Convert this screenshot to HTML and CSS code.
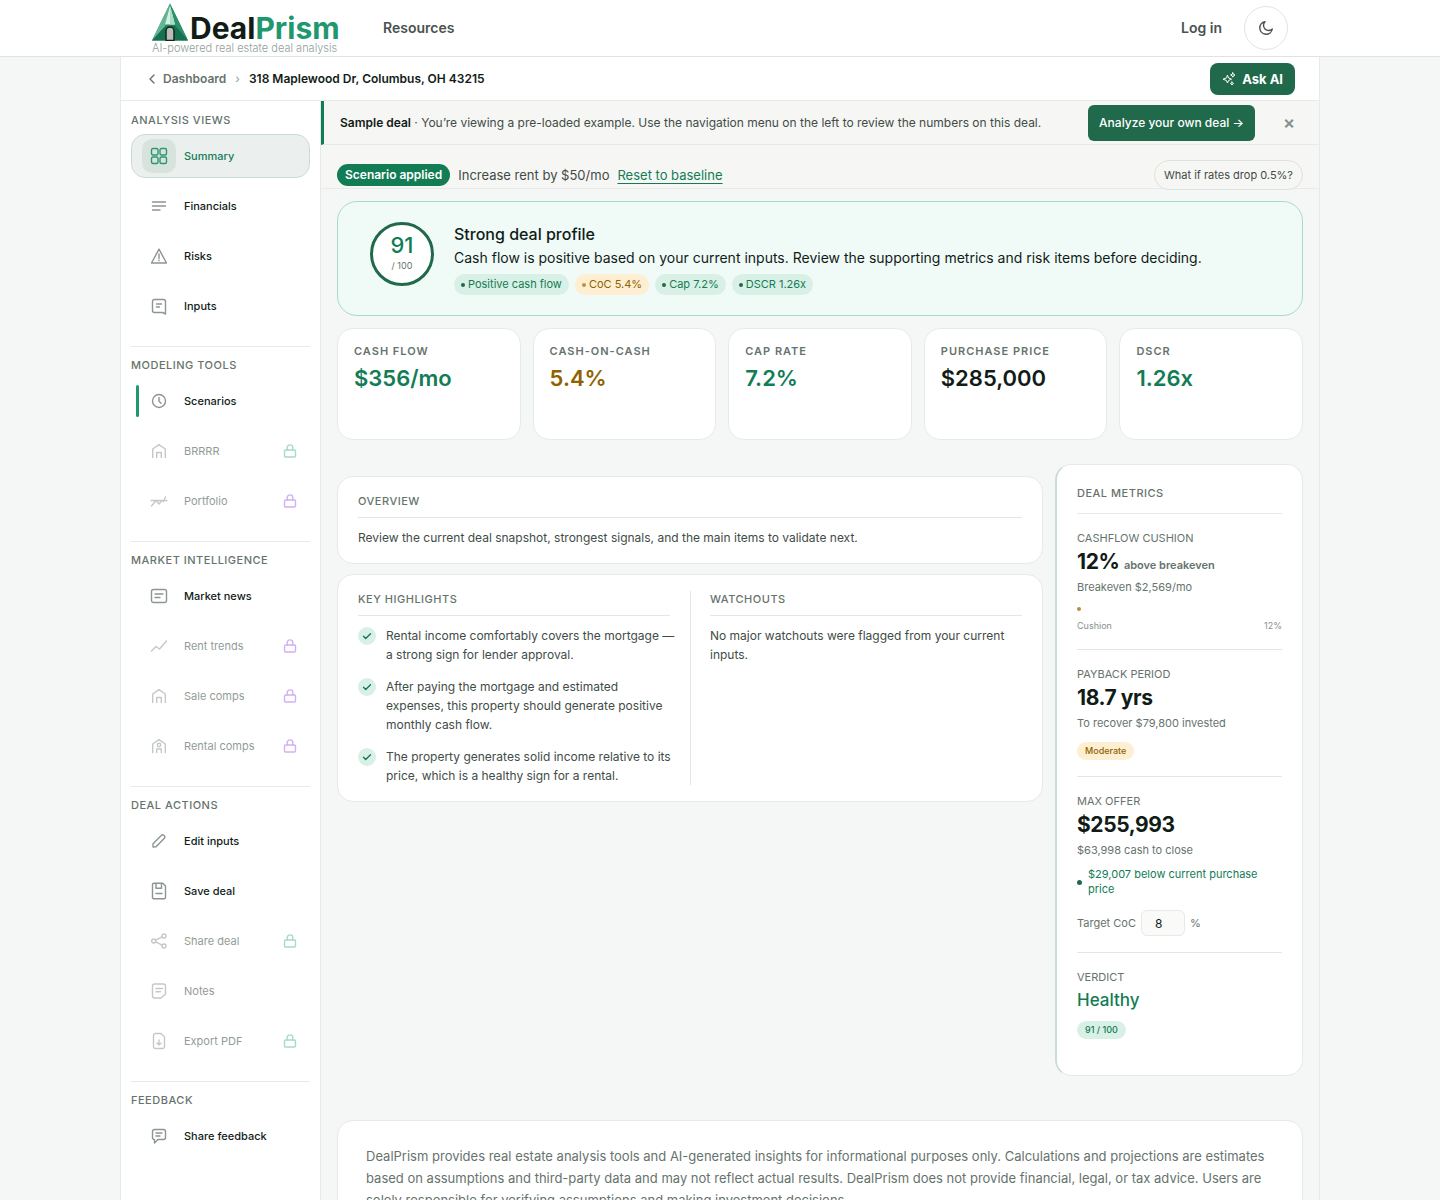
FILE: index.html
```html
<!DOCTYPE html>
<html lang="en">
<head>
  <meta charset="UTF-8">
  <meta name="viewport" content="width=device-width, initial-scale=1">
  <title>318 Maplewood Dr - DealPrism</title>
  <link rel="stylesheet" href="styles.css">
</head>
<body>

<!-- icon set -->
<svg class="sprite" aria-hidden="true">
  <symbol id="i-lock" viewBox="0 0 14 14"><rect x="1.5" y="6" width="11" height="7" rx="1.2"/><path d="M4.2 6V3.6C4.2 2 5.3.9 7 .9s2.800 1.100 2.800 2.700V6"/></symbol>
  <symbol id="i-grid" viewBox="0 0 18 18"><rect x="1.500" y="1.500" width="6.500" height="6.500" rx="1.500"/><rect x="10" y="1.500" width="6.500" height="6.500" rx="1.500"/><rect x="1.500" y="10" width="6.500" height="6.500" rx="1.500"/><rect x="10" y="10" width="6.500" height="6.500" rx="1.500"/></symbol>
  <symbol id="i-lines" viewBox="0 0 18 18"><path d="M2.500 5h13M2.500 9h13M2.500 13h7.500"/></symbol>
  <symbol id="i-risk" viewBox="0 0 18 18"><path d="M9 2.200 16.500 16h-15zM9 7v4.500M9 13.300v.4"/></symbol>
  <symbol id="i-inputs" viewBox="0 0 18 18"><path d="M12.500 15.500H4.500a2 2 0 0 1-2-2v-9a2 2 0 0 1 2-2h9a2 2 0 0 1 2 2V17zM6.500 7h5M6.500 10h3"/></symbol>
  <symbol id="i-clock" viewBox="0 0 18 18"><circle cx="9" cy="9" r="6.500"/><path d="M9 5.500V9.200l2 2"/></symbol>
  <symbol id="i-home" viewBox="0 0 18 18"><path d="M2.700 15.500V7L9 2.700 15.300 7v8.500M6.700 15.500v-5h4.600v5"/></symbol>
  <symbol id="i-rental" viewBox="0 0 18 18"><path d="M2.700 15.500V7L9 2.700 15.300 7v8.500M6.700 15.500v-3.500h4.600v3.500"/><circle cx="9" cy="8" r="1.700"/></symbol>
  <symbol id="i-portfolio" viewBox="0 0 18 18"><path d="M1 8.500h16M1.500 14 6 8.500l3 3.500 3-3.500 1.500 1L15.500 5"/></symbol>
  <symbol id="i-news" viewBox="0 0 18 18"><rect x="1.500" y="2.500" width="15" height="13" rx="2"/><path d="M5 7h8M5 10.500h5"/></symbol>
  <symbol id="i-trend" viewBox="0 0 18 18"><path d="M1.500 14 6 9.500l3.500 2.500 7-8"/></symbol>
  <symbol id="i-edit" viewBox="0 0 18 18"><path d="M3 15v-3.200L11.500 3.300a1.600 1.600 0 0 1 2.300 0l.6.600a1.600 1.600 0 0 1 0 2.300L6 14.800z"/></symbol>
  <symbol id="i-save" viewBox="0 0 18 18"><path d="M2.500 15.500V2.500a1.300 1.300 0 0 1 1.300-1.300h9L15.500 4v11.500a1.300 1.300 0 0 1-1.300 1.300H3.800a1.300 1.300 0 0 1-1.300-1.300zM6 1.500v4.700h5.500V1.500M6 11.500h6"/></symbol>
  <symbol id="i-share" viewBox="0 0 18 18"><circle cx="3.700" cy="9" r="2"/><circle cx="14" cy="4" r="2"/><circle cx="14" cy="14" r="2"/><path d="m5.600 8.100 6.500-3.200M5.600 9.900l6.500 3.200"/></symbol>
  <symbol id="i-notes" viewBox="0 0 18 18"><path d="M11 16H4.500a2 2 0 0 1-2-2V4a2 2 0 0 1 2-2h9a2 2 0 0 1 2 2v8zM6 6.500h6.500M6 9.800h4.500"/></symbol>
  <symbol id="i-pdf" viewBox="0 0 18 18"><path d="M11 1.500H5.200a1.700 1.700 0 0 0-1.700 1.700v11.600a1.700 1.700 0 0 0 1.700 1.700h7.600a1.700 1.700 0 0 0 1.700-1.700V5zM9 8v5M7 11l2 2 2-2"/></symbol>
  <symbol id="i-chat" viewBox="0 0 18 18"><path d="M4.500 2.500h9a2 2 0 0 1 2 2v6a2 2 0 0 1-2 2H8L4.500 16v-3.500a2 2 0 0 1-2-2v-6a2 2 0 0 1 2-2zM6 6h6M6 9h4"/></symbol>
  <symbol id="i-check" viewBox="0 0 10 10"><path d="M1.500 5.300 3.700 7.500 8.500 2.700"/></symbol>
</svg>

<header class="topbar">
  <div class="topbar-inner">
    <a href="#" class="logo">
      <span class="logo-row">
        <svg class="logo-mark" viewBox="0 0 36 37" aria-hidden="true">
          <path d="M18 0 0 37h36z" fill="#1f8a63"/>
          <path d="M18 0 7 22.500 0 37l13-14z" fill="#63b596"/>
          <path d="M18 0 36 37 23 22z" fill="#2b8f69"/>
          <path d="M0 37 13 23l10-1 13 15z" fill="#17704e"/>
          <path d="m18 2-5 19h10z" fill="#d3f0e3"/>
          <path d="M18 2v19h5z" fill="#a9dcc5"/>
          <path d="M14 37V27.500a4 4 0 0 1 8 0V37z" fill="#b9bdbb" stroke="#12241d" stroke-width="1.500"/>
        </svg>
        <span class="logo-name">Deal<b>Prism</b></span>
      </span>
      <span class="logo-tag">AI-powered real estate deal analysis</span>
    </a>
    <nav class="topnav"><a href="#">Resources</a></nav>
    <a href="#" class="login">Log in</a>
    <button class="theme-btn" type="button" aria-label="Toggle dark mode">
      <svg viewBox="0 0 16 16"><path d="M14.300 9A6.300 6.300 0 1 1 7 1.700 5 5 0 0 0 14.300 9z"/></svg>
    </button>
  </div>
</header>

<div class="shell">
  <div class="crumbs">
    <a href="#" class="back"><svg viewBox="0 0 8 10"><path d="M6 1 2 5l4 4"/></svg>Dashboard</a>
    <span class="sep">›</span>
    <span class="address">318 Maplewood Dr, Columbus, OH 43215</span>
    <button class="ask-btn" type="button">
      <svg viewBox="0 0 14 14"><path d="M5.500 3.500 6.700 6 9.500 7.200 6.700 8.400 5.500 11 4.300 8.400 1 7.200 4.300 6zM10.800.8l.7 1.500 1.500.7-1.500.7-.7 1.500-.7-1.500L8.600 3l1.500-.7zM10 10l.5 1 1 .5-1 .5-.5 1-.5-1-1-.5 1-.5z"/></svg>
      Ask AI
    </button>
  </div>

  <div class="layout">
    <aside class="sidebar">
      <section class="side-group">
        <h2>Analysis views</h2>
        <a href="#" class="side-item active"><span class="ico"><svg><use href="#i-grid"/></svg></span>Summary</a>
        <a href="#" class="side-item"><span class="ico"><svg><use href="#i-lines"/></svg></span>Financials</a>
        <a href="#" class="side-item"><span class="ico"><svg><use href="#i-risk"/></svg></span>Risks</a>
        <a href="#" class="side-item"><span class="ico"><svg><use href="#i-inputs"/></svg></span>Inputs</a>
      </section>
      <section class="side-group">
        <h2>Modeling tools</h2>
        <a href="#" class="side-item marked"><span class="ico"><svg><use href="#i-clock"/></svg></span>Scenarios</a>
        <a href="#" class="side-item off"><span class="ico"><svg><use href="#i-home"/></svg></span>BRRRR<svg class="lock"><use href="#i-lock"/></svg></a>
        <a href="#" class="side-item off"><span class="ico"><svg><use href="#i-portfolio"/></svg></span>Portfolio<svg class="lock pro"><use href="#i-lock"/></svg></a>
      </section>
      <section class="side-group">
        <h2>Market intelligence</h2>
        <a href="#" class="side-item"><span class="ico"><svg><use href="#i-news"/></svg></span>Market news</a>
        <a href="#" class="side-item off"><span class="ico"><svg><use href="#i-trend"/></svg></span>Rent trends<svg class="lock pro"><use href="#i-lock"/></svg></a>
        <a href="#" class="side-item off"><span class="ico"><svg><use href="#i-home"/></svg></span>Sale comps<svg class="lock pro"><use href="#i-lock"/></svg></a>
        <a href="#" class="side-item off"><span class="ico"><svg><use href="#i-rental"/></svg></span>Rental comps<svg class="lock pro"><use href="#i-lock"/></svg></a>
      </section>
      <section class="side-group">
        <h2>Deal actions</h2>
        <a href="#" class="side-item"><span class="ico"><svg><use href="#i-edit"/></svg></span>Edit inputs</a>
        <a href="#" class="side-item"><span class="ico"><svg><use href="#i-save"/></svg></span>Save deal</a>
        <a href="#" class="side-item off"><span class="ico"><svg><use href="#i-share"/></svg></span>Share deal<svg class="lock"><use href="#i-lock"/></svg></a>
        <a href="#" class="side-item off"><span class="ico"><svg><use href="#i-notes"/></svg></span>Notes</a>
        <a href="#" class="side-item off"><span class="ico"><svg><use href="#i-pdf"/></svg></span>Export PDF<svg class="lock"><use href="#i-lock"/></svg></a>
      </section>
      <section class="side-group">
        <h2>Feedback</h2>
        <a href="#" class="side-item"><span class="ico"><svg><use href="#i-chat"/></svg></span>Share feedback</a>
      </section>
    </aside>

    <main class="main">
      <div class="sample-bar">
        <p><strong>Sample deal</strong> · You’re viewing a pre-loaded example. Use the navigation menu on the left to review the numbers on this deal.</p>
        <a href="#" class="own-btn">Analyze your own deal →</a>
        <button class="close-btn" type="button" aria-label="Dismiss">×</button>
      </div>

      <div class="scenario-bar">
        <span class="applied">Scenario applied</span>
        <span>Increase rent by $50/mo</span>
        <a href="#">Reset to baseline</a>
        <button class="whatif" type="button">What if rates drop 0.5%?</button>
      </div>

      <div class="content">
        <section class="hero">
          <div class="score"><b>91</b><span>/ 100</span></div>
          <div class="hero-body">
            <h1>Strong deal profile</h1>
            <p>Cash flow is positive based on your current inputs. Review the supporting metrics and risk items before deciding.</p>
            <div class="chips">
              <span class="chip">Positive cash flow</span>
              <span class="chip amber">CoC 5.4%</span>
              <span class="chip">Cap 7.2%</span>
              <span class="chip">DSCR 1.26x</span>
            </div>
          </div>
        </section>

        <section class="kpis">
          <div class="kpi good"><h3>Cash flow</h3><strong>$356/mo</strong></div>
          <div class="kpi warn"><h3>Cash-on-cash</h3><strong>5.4%</strong></div>
          <div class="kpi good"><h3>Cap rate</h3><strong>7.2%</strong></div>
          <div class="kpi"><h3>Purchase price</h3><strong>$285,000</strong></div>
          <div class="kpi good"><h3>DSCR</h3><strong>1.26x</strong></div>
        </section>

        <div class="columns">
          <div class="col-left">
            <section class="card">
              <h2 class="card-title">Overview</h2>
              <p>Review the current deal snapshot, strongest signals, and the main items to validate next.</p>
            </section>
            <section class="card split">
              <div>
                <h2 class="card-title">Key highlights</h2>
                <ul class="checks">
                  <li><span class="tick"><svg><use href="#i-check"/></svg></span>Rental income comfortably covers the mortgage — a strong sign for lender approval.</li>
                  <li><span class="tick"><svg><use href="#i-check"/></svg></span>After paying the mortgage and estimated expenses, this property should generate positive monthly cash flow.</li>
                  <li><span class="tick"><svg><use href="#i-check"/></svg></span>The property generates solid income relative to its price, which is a healthy sign for a rental.</li>
                </ul>
              </div>
              <div>
                <h2 class="card-title">Watchouts</h2>
                <p>No major watchouts were flagged from your current inputs.</p>
              </div>
            </section>
          </div>

          <aside class="metrics">
            <h2>Deal metrics</h2>
            <div class="metric">
              <h3>Cashflow cushion</h3>
              <div class="value">12% <small>above breakeven</small></div>
              <div class="sub">Breakeven $2,569/mo</div>
              <div class="bar"></div>
              <div class="bar-legend"><span>Cushion</span><span>12%</span></div>
            </div>
            <div class="metric">
              <h3>Payback period</h3>
              <div class="value">18.7 yrs</div>
              <div class="sub">To recover $79,800 invested</div>
              <span class="pill amber">Moderate</span>
            </div>
            <div class="metric">
              <h3>Max offer</h3>
              <div class="value">$255,993</div>
              <div class="sub">$63,998 cash to close</div>
              <div class="note">$29,007 below current purchase price</div>
              <div class="target">
                <label for="coc">Target CoC</label>
                <input id="coc" type="text" value="8">
                <span>%</span>
              </div>
            </div>
            <div class="metric">
              <h3>Verdict</h3>
              <div class="verdict">Healthy</div>
              <span class="pill">91 / 100</span>
            </div>
          </aside>
        </div>

        <footer class="disclaimer">DealPrism provides real estate analysis tools and AI-generated insights for informational purposes only. Calculations and projections are estimates based on assumptions and third-party data and may not reflect actual results. DealPrism does not provide financial, legal, or tax advice. Users are solely responsible for verifying assumptions and making investment decisions.</footer>
      </div>
    </main>
  </div>
</div>

</body>
</html>
```
FILE: styles.css
```css
:root {
  --green: #127c55;
  --green-dark: #20694b;
  --mint: #d9f0e6;
  --amber: #8f6200;
  --amber-bg: #feefd3;
  --ink: #111c17;
  --text: #414c47;
  --muted: #66736d;
  --line: #e6eae8;
  --bg: #f4f7f5;
}

* { box-sizing: border-box; }

body {
  margin: 0;
  background: var(--bg);
  color: var(--ink);
  font-family: Inter, "Liberation Sans", sans-serif;
  font-size: 12px;
}

h1, h2, h3, p, ul { margin: 0; padding: 0; font-weight: 500; }
ul { list-style: none; }
a { color: inherit; text-decoration: none; }
button, input { font-family: inherit; }
button { cursor: pointer; }
svg { fill: none; stroke: currentColor; stroke-linecap: round; stroke-linejoin: round; }
.sprite { display: none; }

/* top bar */
.topbar {
  background: #fff;
  border-bottom: 1px solid #e0e3e1;
}

.topbar-inner {
  display: flex;
  align-items: center;
  max-width: 1136px;
  height: 56px;
  margin: 0 auto;
  font-size: 14px;
  font-weight: 600;
  color: #4a524e;
}

.logo { display: block; width: 188px; }
.logo-row { display: flex; align-items: flex-end; gap: 2px; height: 40px; }
.logo-mark { width: 36px; height: 38px; stroke: none; flex: none; }
.logo-name {
  font-size: 30px;
  font-weight: 700;
  line-height: 26px;
  color: var(--ink);
}
.logo-name b { font-weight: 700; color: #1f9870; }
.logo-tag {
  display: block;
  font-size: 11px;
  font-weight: 300;
  line-height: 15px;
  white-space: nowrap;
  color: #93a09a;
}

.topnav { margin-left: 43px; }
.login { margin-left: auto; margin-right: 22px; }
.topnav, .login { padding-bottom: 2px; }

.theme-btn {
  display: grid;
  place-items: center;
  width: 44px;
  height: 44px;
  padding: 0;
  border: 1px solid #e2e5e3;
  border-radius: 50%;
  background: #fff;
  color: #4a524e;
}
.theme-btn svg { width: 16px; height: 16px; stroke-width: 1.4; }

/* shell */
.shell {
  max-width: 1200px;
  min-height: calc(100vh - 57px);
  margin: 0 auto;
  border: solid var(--line);
  border-width: 0 1px;
}

.crumbs {
  display: flex;
  align-items: center;
  height: 44px;
  padding: 0 24px 0 27px;
  background: #fff;
  border-bottom: 1px solid var(--line);
  font-weight: 600;
}
.back { display: flex; align-items: center; gap: 7px; color: var(--muted); }
.back svg { width: 8px; height: 10px; stroke-width: 1.4; }
.sep { margin: 0 9px; font-weight: 400; color: #93a09a; }

.ask-btn {
  display: flex;
  align-items: center;
  gap: 6px;
  height: 32px;
  margin-left: auto;
  padding: 0 12px;
  border: 0;
  border-radius: 8px;
  background: var(--green-dark);
  color: #fff;
  font-size: 13px;
  font-weight: 700;
}
.ask-btn svg { width: 14px; height: 14px; }

.layout { display: grid; grid-template-columns: 200px minmax(0, 1fr); }

/* sidebar */
.sidebar {
  padding: 0 10px;
  background: #fff;
  border-right: 1px solid var(--line);
}

.side-group {
  display: flex;
  flex-direction: column;
  gap: 6px;
  padding: 10px 0 18px;
  border-top: 1px solid var(--line);
}
.side-group:first-child { border-top-color: transparent; }
.side-group h2 {
  font-size: 11px;
  line-height: 16px;
  letter-spacing: 0.5px;
  text-transform: uppercase;
  color: var(--muted);
}

.side-item {
  position: relative;
  display: flex;
  align-items: center;
  gap: 8px;
  height: 44px;
  padding: 0 12px 0 10px;
  border: 1px solid transparent;
  border-radius: 14px;
  font-size: 11px;
  font-weight: 500;
}
.ico {
  display: grid;
  place-items: center;
  width: 34px;
  height: 34px;
  border-radius: 10px;
  color: #8b9691;
}
.ico svg { width: 18px; height: 18px; stroke-width: 1.4; }
.side-item.active {
  background: #ebf0ee;
  border-color: #c7ddd3;
  color: var(--green);
}
.side-item.active .ico { background: #d9e3de; color: #2c9870; }
.side-item.marked::before {
  content: "";
  position: absolute;
  left: 4px;
  top: 5px;
  width: 3px;
  height: 32px;
  border-radius: 2px;
  background: #1f9870;
}
.side-item.off { color: #929c97; font-weight: 400; }
.side-item.off .ico { color: #c3c9c6; }
.lock { width: 14px; height: 14px; margin-left: auto; color: #a5dbc5; stroke-width: 1.4; }
.lock.pro { color: #d3aff5; }

/* bars over the content */
.sample-bar {
  display: flex;
  align-items: center;
  height: 44px;
  padding: 0 24px 0 16px;
  border-left: 3px solid var(--green);
  border-bottom: 1px solid var(--line);
  background: #f6f6f4;
  color: var(--text);
}
.sample-bar strong { color: var(--ink); font-weight: 600; }
.sample-bar p { font-weight: 400; }

.own-btn {
  margin-left: auto;
  padding: 0 11px;
  border-radius: 6px;
  background: var(--green-dark);
  color: #fff;
  font-weight: 500;
  line-height: 36px;
  white-space: nowrap;
}
.close-btn {
  margin-left: 28px;
  padding: 0;
  border: 0;
  background: none;
  color: #86918c;
  font-size: 18px;
  font-weight: 600;
}

.scenario-bar {
  display: flex;
  align-items: center;
  gap: 8px;
  height: 44px;
  padding: 16px 16px 0;
  border-bottom: 1px solid var(--line);
  background: #f6f6f4;
  color: var(--text);
  font-size: 13px;
}
.scenario-bar a { color: var(--green); text-decoration: underline; text-underline-offset: 3px; }
.applied {
  padding: 0 8px;
  border-radius: 11px;
  background: var(--green);
  color: #fff;
  font-size: 12px;
  font-weight: 600;
  line-height: 22px;
}
.whatif {
  height: 30px;
  margin-left: auto;
  padding: 0 9px;
  border: 1px solid #dde2df;
  border-radius: 15px;
  background: #f6f6f4;
  color: var(--text);
  font-size: 11px;
  flex: none;
}

.content { padding: 12px 16px 32px; }

/* score card */
.hero {
  display: flex;
  gap: 20px;
  padding: 20px 32px;
  border: 1px solid #a9dcc7;
  border-radius: 20px;
  background: #f0faf7;
}
.score {
  display: flex;
  flex-direction: column;
  align-items: center;
  justify-content: center;
  gap: 2px;
  width: 64px;
  height: 64px;
  padding-bottom: 2px;
  border: 3px solid var(--green-dark);
  border-radius: 50%;
  background: #fff;
  flex: none;
}
.score b { font-size: 22px; font-weight: 500; line-height: 24px; color: var(--green); }
.score span { font-size: 9px; line-height: 14px; color: var(--muted); }
.hero h1 { font-size: 16px; line-height: 24px; }
.hero p { font-size: 14px; font-weight: 400; line-height: 24px; }

.chips { display: flex; gap: 6px; margin-top: 4px; }
.chip {
  display: flex;
  align-items: center;
  gap: 3px;
  padding: 0 7px;
  border-radius: 11px;
  background: var(--mint);
  color: var(--green);
  font-size: 11px;
  line-height: 21px;
}
.chip::before {
  content: "";
  width: 4px;
  height: 4px;
  border-radius: 50%;
  background: var(--green-dark);
}
.chip.amber, .pill.amber { background: var(--amber-bg); color: var(--amber); }
.chip.amber::before { background: #c09245; }

/* kpis */
.kpis {
  display: grid;
  grid-template-columns: repeat(5, 1fr);
  gap: 12px;
  margin-top: 12px;
}
.kpi {
  min-height: 112px;
  padding: 14px 16px;
  border: 1px solid var(--line);
  border-radius: 16px;
  background: #fff;
}
.kpi h3 {
  font-size: 11px;
  font-weight: 600;
  line-height: 16px;
  letter-spacing: 1px;
  text-transform: uppercase;
  color: var(--muted);
}
.kpi strong { display: block; margin-top: 3px; font-size: 22px; font-weight: 600; line-height: 32px; }
.kpi.good strong { color: var(--green); }
.kpi.warn strong { color: var(--amber); }

/* columns */
.columns {
  display: grid;
  grid-template-columns: minmax(0, 1fr) 248px;
  align-items: start;
  gap: 12px;
  margin-top: 24px;
}
.col-left { display: grid; gap: 10px; padding-top: 12px; }

.card {
  padding: 16px 20px;
  border: 1px solid var(--line);
  border-radius: 16px;
  background: #fff;
}
.card-title {
  margin-bottom: 10px;
  padding-bottom: 8px;
  border-bottom: 1px solid #e2e6e4;
  font-size: 11px;
  line-height: 16px;
  letter-spacing: 0.5px;
  text-transform: uppercase;
  color: var(--muted);
}
.card p, .checks li { font-weight: 400; line-height: 19px; color: var(--text); }

.split { display: grid; grid-template-columns: 1fr 1fr; }
.split > div:first-child { padding-right: 20px; }
.split > div:last-child { padding-left: 19px; border-left: 1px solid #e2e6e4; }

.checks { display: grid; gap: 13px; margin-right: -8px; }
.checks li { display: flex; gap: 10px; }
.tick {
  display: grid;
  place-items: center;
  width: 18px;
  height: 18px;
  margin-top: 1px;
  border-radius: 50%;
  background: var(--mint);
  color: var(--green);
  flex: none;
}
.tick svg { width: 10px; height: 10px; stroke-width: 1.4; }

/* metrics panel */
.metrics {
  padding: 20px;
  border: 1px solid var(--line);
  border-left: 2px solid #c9ded5;
  border-radius: 16px;
  background: #fff;
}
.metrics h2 {
  padding-bottom: 12px;
  border-bottom: 1px solid var(--line);
  font-size: 11px;
  line-height: 16px;
  letter-spacing: 0.5px;
  text-transform: uppercase;
  color: var(--muted);
}
.metric {
  padding: 16px 0;
  border-bottom: 1px solid #e2e6e4;
  font-size: 11px;
  color: var(--muted);
}
.metric:last-child { border-bottom: 0; }
.metric h3 {
  font-size: 11px;
  font-weight: 400;
  line-height: 16px;
  text-transform: uppercase;
}
.value { margin-top: 2px; font-size: 21px; font-weight: 700; line-height: 28px; letter-spacing: -0.02em; color: var(--ink); }
.value small { font-size: 11px; font-weight: 600; line-height: 1; letter-spacing: 0; color: var(--muted); }
.sub { margin-top: 3px; line-height: 16px; }
.bar { width: 4px; height: 4px; margin-top: 12px; border-radius: 50%; background: #bd8c3e; }
.bar-legend {
  display: flex;
  justify-content: space-between;
  margin-top: 8px;
  font-size: 9px;
  line-height: 14px;
  color: #86918c;
}
.pill {
  display: block;
  width: fit-content;
  margin-top: 11px;
  padding: 0 8px;
  border-radius: 9px;
  background: var(--mint);
  color: var(--green);
  font-size: 9px;
  font-weight: 500;
  line-height: 18px;
}
.note {
  display: flex;
  align-items: center;
  gap: 6px;
  margin-top: 9px;
  line-height: 15px;
  color: var(--green);
}
.note::before {
  content: "";
  width: 5px;
  height: 5px;
  border-radius: 50%;
  background: var(--green-dark);
  flex: none;
}
.target { display: flex; align-items: center; gap: 5px; margin-top: 13px; }
.target input {
  width: 44px;
  height: 26px;
  padding: 0 13px;
  border: 1px solid var(--line);
  border-radius: 6px;
  background: #fafaf8;
  color: var(--ink);
  font-size: 12px;
}
.verdict { margin-top: 2px; font-size: 17px; font-weight: 500; line-height: 26px; color: var(--green); }
.verdict + .pill { margin-top: 8px; }

.disclaimer {
  margin-top: 44px;
  padding: 24px 28px;
  border: 1px solid var(--line);
  border-radius: 16px;
  background: #fff;
  color: var(--muted);
  font-size: 13px;
  line-height: 22px;
}
```
